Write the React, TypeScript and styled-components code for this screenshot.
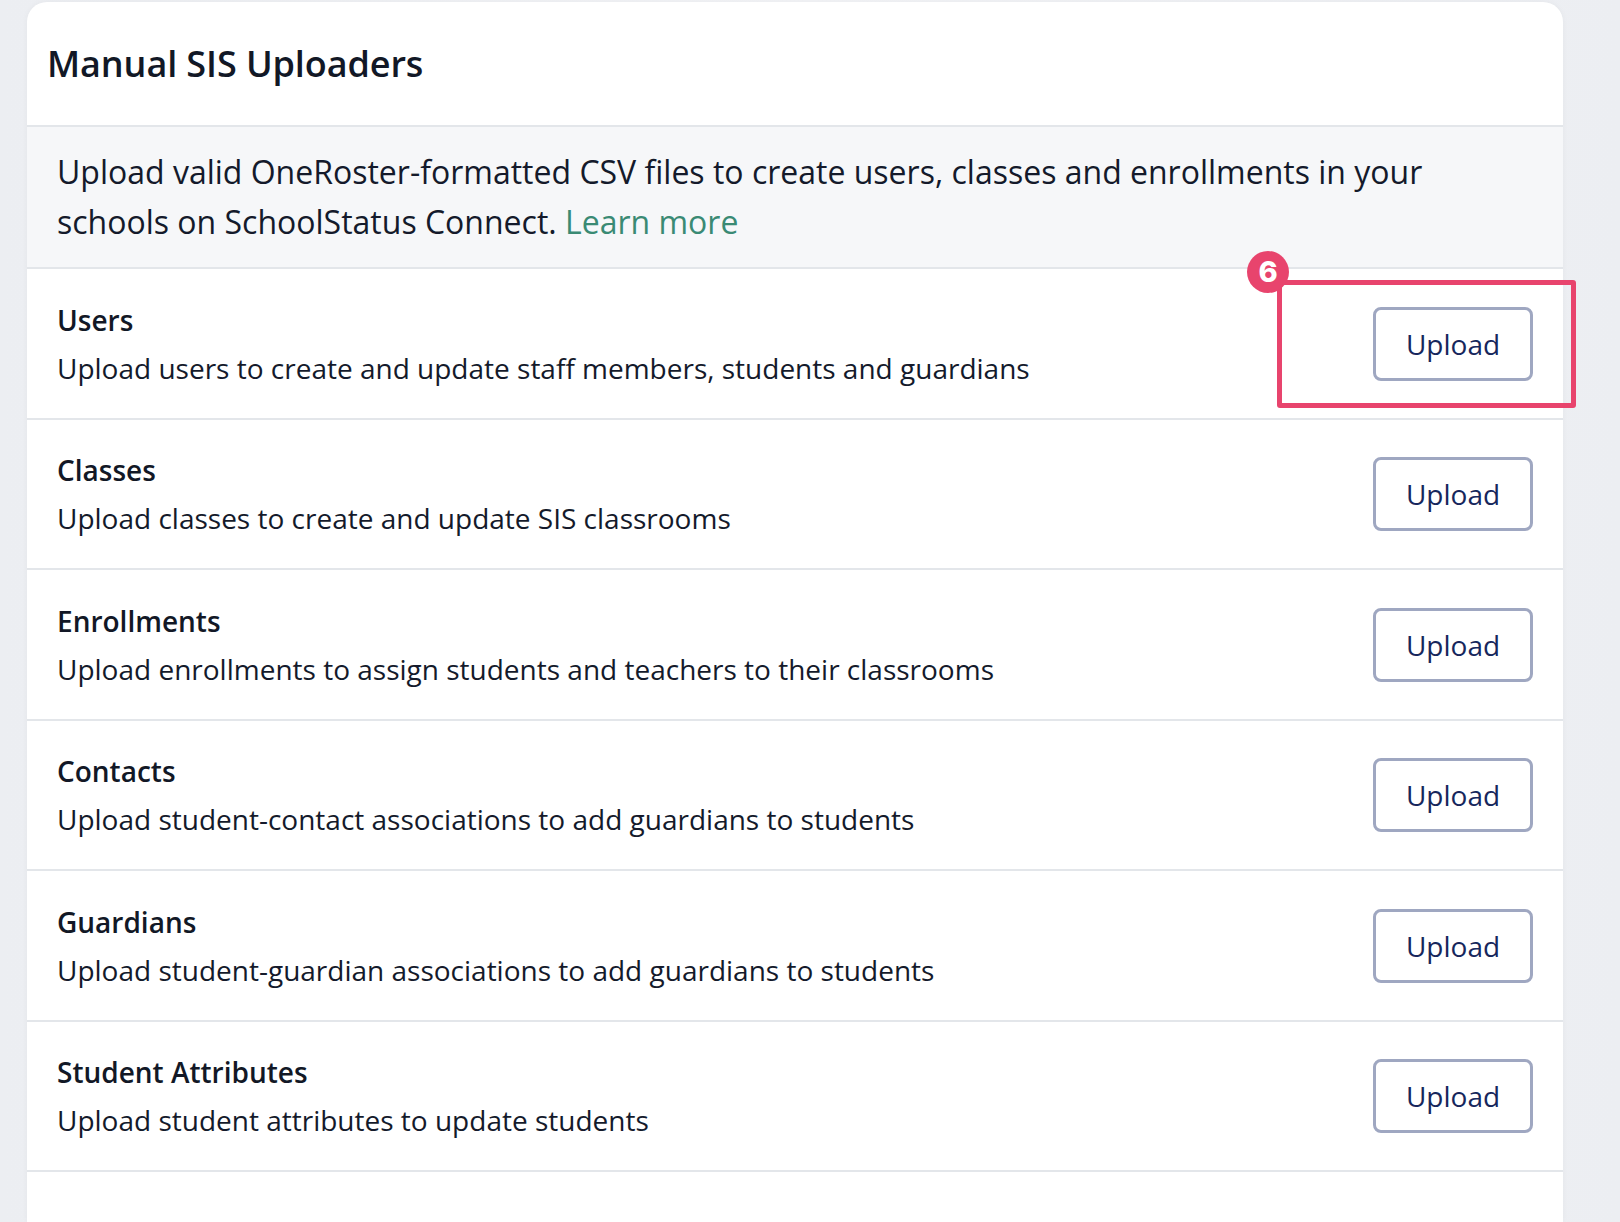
import React from 'react';
import styled, { createGlobalStyle } from 'styled-components';

const GlobalStyle = createGlobalStyle`
  html, body {
    margin: 0;
    padding: 0;
  }
  body {
    font-family: 'Open Sans', 'Noto Sans', sans-serif;
    color: #141a2b;
    background: linear-gradient(90deg, #eceef2 0%, #f2f3f6 50%, #eceef2 100%);
    overflow: hidden;
  }
`;

const Page = styled.div`
  height: 1222px;
  padding: 2px 57px 0 27px;
  box-sizing: border-box;
`;

const Card = styled.section`
  width: 1536px;
  height: 1220px;
  background: #ffffff;
  border-radius: 20px 20px 0 0;
  box-shadow: 0 0 6px rgba(20, 26, 43, 0.04);
  display: flex;
  flex-direction: column;
`;

const Header = styled.header`
  height: 123px;
  display: flex;
  align-items: center;
  padding: 0 20px;
  border-bottom: 2px solid #e3e6ea;
`;

const Title = styled.h1`
  margin: 0;
  font-size: 36px;
  font-weight: 600;
  color: #121826;
  letter-spacing: -0.1px;
`;

const Intro = styled.div`
  background: #f6f7f9;
  padding: 20px 30px 20px;
  border-bottom: 2px solid #e3e6ea;
  font-size: 32px;
  line-height: 50px;
  color: #141a2b;
`;

const LearnMore = styled.a`
  color: #3a8a74;
  text-decoration: none;
`;

const Row = styled.div`
  display: flex;
  align-items: center;
  justify-content: space-between;
  padding: 30.5px 30px 30px;
  border-bottom: 2px solid #e3e6ea;
`;

const RowText = styled.div`
  display: flex;
  flex-direction: column;
  gap: 8px;
`;

const RowTitle = styled.div`
  font-size: 28px;
  font-weight: 600;
  line-height: 40px;
  color: #121826;
`;

const RowDesc = styled.div`
  font-size: 28px;
  line-height: 40px;
  color: #141a2b;
`;

const ButtonWrap = styled.div`
  position: relative;
`;

const UploadButton = styled.button`
  box-sizing: border-box;
  width: 160px;
  height: 74px;
  background: #ffffff;
  border: 3px solid #9fa7c1;
  border-radius: 8px;
  font-family: 'Open Sans', 'Noto Sans', sans-serif;
  font-size: 28px;
  color: #17275c;
  cursor: pointer;
  padding: 0;
`;

const Highlight = styled.div`
  position: absolute;
  top: -27px;
  left: -96px;
  right: -43px;
  bottom: -27px;
  border: 5px solid #e8446d;
  border-radius: 3px;
  pointer-events: none;
`;

const Badge = styled.span`
  position: absolute;
  top: -34px;
  left: -35px;
  width: 42px;
  height: 42px;
  border-radius: 50%;
  background: #e8446d;
  color: #ffffff;
  font-family: 'Inter', 'Open Sans', sans-serif;
  font-weight: 800;
  font-size: 29px;
  line-height: 42px;
  text-align: center;
`;

const uploaders = [
  { title: 'Users', desc: 'Upload users to create and update staff members, students and guardians', marker: 6 },
  { title: 'Classes', desc: 'Upload classes to create and update SIS classrooms' },
  { title: 'Enrollments', desc: 'Upload enrollments to assign students and teachers to their classrooms' },
  { title: 'Contacts', desc: 'Upload student-contact associations to add guardians to students' },
  { title: 'Guardians', desc: 'Upload student-guardian associations to add guardians to students' },
  { title: 'Student Attributes', desc: 'Upload student attributes to update students' },
];

export default function App() {
  return (
    <>
      <GlobalStyle />
      <Page>
        <Card>
          <Header>
            <Title>Manual SIS Uploaders</Title>
          </Header>
          <Intro>
            Upload valid OneRoster-formatted CSV files to create users, classes and enrollments in your schools on
            SchoolStatus Connect. <LearnMore href="#">Learn more</LearnMore>
          </Intro>
          {uploaders.map((u) => (
            <Row key={u.title}>
              <RowText>
                <RowTitle>{u.title}</RowTitle>
                <RowDesc>{u.desc}</RowDesc>
              </RowText>
              <ButtonWrap>
                <UploadButton>Upload</UploadButton>
                {u.marker && (
                  <Highlight>
                    <Badge>{u.marker}</Badge>
                  </Highlight>
                )}
              </ButtonWrap>
            </Row>
          ))}
        </Card>
      </Page>
    </>
  );
}
